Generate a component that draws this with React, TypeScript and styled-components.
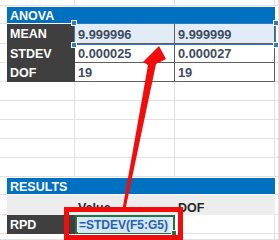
import React from "react";
import styled, { createGlobalStyle } from "styled-components";

const GRID_LINE = "#e1e1e1";
const TABLE_LINE = "#5f5f5f";
const BLUE = "#0070c0";
const DARK = "#3f3f3f";
const VALUE_TEXT = "#3e4b5d";

const GlobalStyle = createGlobalStyle`
  html, body {
    margin: 0;
    padding: 0;
    background: #fff;
  }
  body {
    font-family: "Liberation Sans", Arial, sans-serif;
  }
`;

type Row = { label: string; values: string[] };

const anova: Row[] = [
  { label: "MEAN", values: ["9.999996", "9.999999"] },
  { label: "STDEV", values: ["0.000025", "0.000027"] },
  { label: "DOF", values: ["19", "19"] }
];

export default function App() {
  return (
    <>
      <GlobalStyle />
      <Page>
        <Sheet>
          {/* row 1: top sliver */}
          {[0, 1, 2, 3, 4].map((i) => (
            <Blank key={`t${i}`} $gutter={i === 0} />
          ))}

          {/* ANOVA title */}
          <Blank $gutter />
          <TitleBar>ANOVA</TitleBar>
          <Blank />

          {anova.map((row, r) => (
            <React.Fragment key={row.label}>
              <Blank $gutter />
              <LabelCell>{row.label}</LabelCell>
              {row.values.map((v, c) => (
                <ValueCell key={c} $selected={r === 0}>
                  {v}
                  {r === 0 && c === 0 && (
                    <Selection>
                      <Handle $x="left" $y="top" />
                      <Handle $x="right" $y="top" />
                      <Handle $x="left" $y="bottom" />
                      <Handle $x="right" $y="bottom" />
                    </Selection>
                  )}
                </ValueCell>
              ))}
              <Blank />
            </React.Fragment>
          ))}

          {[0, 1, 2, 3, 4].map((r) =>
            [0, 1, 2, 3, 4].map((i) => (
              <Blank key={`e${r}-${i}`} $gutter={i === 0} />
            ))
          )}

          {/* RESULTS title */}
          <Blank $gutter />
          <TitleBar>RESULTS</TitleBar>
          <Blank />

          <Blank $gutter />
          <HeaderCell />
          <HeaderCell>Value</HeaderCell>
          <HeaderCell>DOF</HeaderCell>
          <Blank />

          <Blank $gutter />
          <LabelCell>RPD</LabelCell>
          <EditCell>
            <Formula>=STDEV(F5:G5)</Formula>
            <Caret />
            <FillHandle />
          </EditCell>
          <Blank />
          <Blank />

          {[0, 1, 2, 3, 4].map((i) => (
            <Blank key={`b${i}`} $gutter={i === 0} />
          ))}
        </Sheet>

        <Callout />
        <Arrow viewBox="0 0 279 240" width="279" height="240">
          <polygon points="122.5,209 125.5,209 156,64 166,59 159,46 143,62 148,65" fill="#f20d0d" />
        </Arrow>
      </Page>
    </>
  );
}

const Page = styled.div`
  position: relative;
  width: 279px;
  height: 240px;
  overflow: hidden;
`;

const Sheet = styled.div`
  display: grid;
  grid-template-columns: 7px 68px 100px 100px 1fr;
  grid-template-rows: 6px 18px 20px 19px 19px 19px 19px 19px 19px 19px 18px 20px 19px 1fr;
  width: 279px;
  height: 240px;
`;

const Blank = styled.div<{ $gutter?: boolean }>`
  box-sizing: border-box;
  border-bottom: 1px solid ${GRID_LINE};
  border-right: ${(p) => (p.$gutter ? "none" : `1px solid ${GRID_LINE}`)};
`;

const TitleBar = styled.div`
  grid-column: span 3;
  background: ${BLUE};
  color: #fff;
  font-weight: bold;
  font-size: 12.5px;
  display: flex;
  align-items: center;
  padding: 1px 0 0 3px;
  border-bottom: 1px solid #fff;
  box-sizing: border-box;
  margin-top: 1px;
`;

const LabelCell = styled.div`
  background: ${DARK};
  color: #fff;
  font-weight: bold;
  font-size: 12.5px;
  display: flex;
  align-items: center;
  padding: 1px 0 0 3px;
  box-sizing: border-box;
  border-bottom: 1px solid ${DARK};
`;

const ValueCell = styled.div<{ $selected?: boolean }>`
  position: relative;
  background: ${(p) => (p.$selected ? "#e2ecf7" : "#fff")};
  color: ${VALUE_TEXT};
  font-weight: bold;
  font-size: 12.8px;
  display: flex;
  align-items: center;
  padding: 1px 0 0 3px;
  box-sizing: border-box;
  border-bottom: 1px solid ${TABLE_LINE};
  border-right: 1px solid ${TABLE_LINE};
`;

const HeaderCell = styled.div`
  background: #ededed;
  color: #262626;
  font-weight: bold;
  font-size: 12.5px;
  display: flex;
  align-items: center;
  padding: 5px 0 0 3px;
  box-sizing: border-box;
`;

const EditCell = styled.div`
  position: relative;
  display: flex;
  align-items: center;
  box-sizing: border-box;
  border: 2px solid #217346;
  padding: 1px 0 0 1px;
  background: #fff;
`;

const Formula = styled.span`
  background: #d7e6f5;
  color: #1f63ad;
  font-weight: bold;
  font-size: 12px;
  line-height: 16px;
  padding: 0 1px;
`;

const Caret = styled.span`
  width: 7px;
  height: 16px;
  background: #e6eff8;
`;

const FillHandle = styled.span`
  position: absolute;
  right: -4px;
  bottom: -4px;
  width: 4px;
  height: 4px;
  background: #217346;
  border: 1px solid #fff;
`;

/* selection outline drawn over the two selected MEAN cells */
const Selection = styled.div`
  position: absolute;
  left: -1px;
  top: -1px;
  width: 202px;
  height: 22px;
  box-sizing: border-box;
  border: 1.5px solid #2f7bc4;
  pointer-events: none;
  z-index: 1;
`;

const Handle = styled.span<{ $x: "left" | "right"; $y: "top" | "bottom" }>`
  position: absolute;
  width: 4px;
  height: 4px;
  background: #2f7bc4;
  border: 1px solid #fff;
  ${(p) => (p.$x === "left" ? "left: -4px;" : "right: -4px;")}
  ${(p) => (p.$y === "top" ? "top: -4px;" : "bottom: -4px;")}
`;

const Callout = styled.div`
  position: absolute;
  left: 64px;
  top: 207px;
  width: 119px;
  height: 33px;
  box-sizing: border-box;
  border: 5px solid #f20d0d;
`;

const Arrow = styled.svg`
  position: absolute;
  left: 0;
  top: 0;
  pointer-events: none;
`;
